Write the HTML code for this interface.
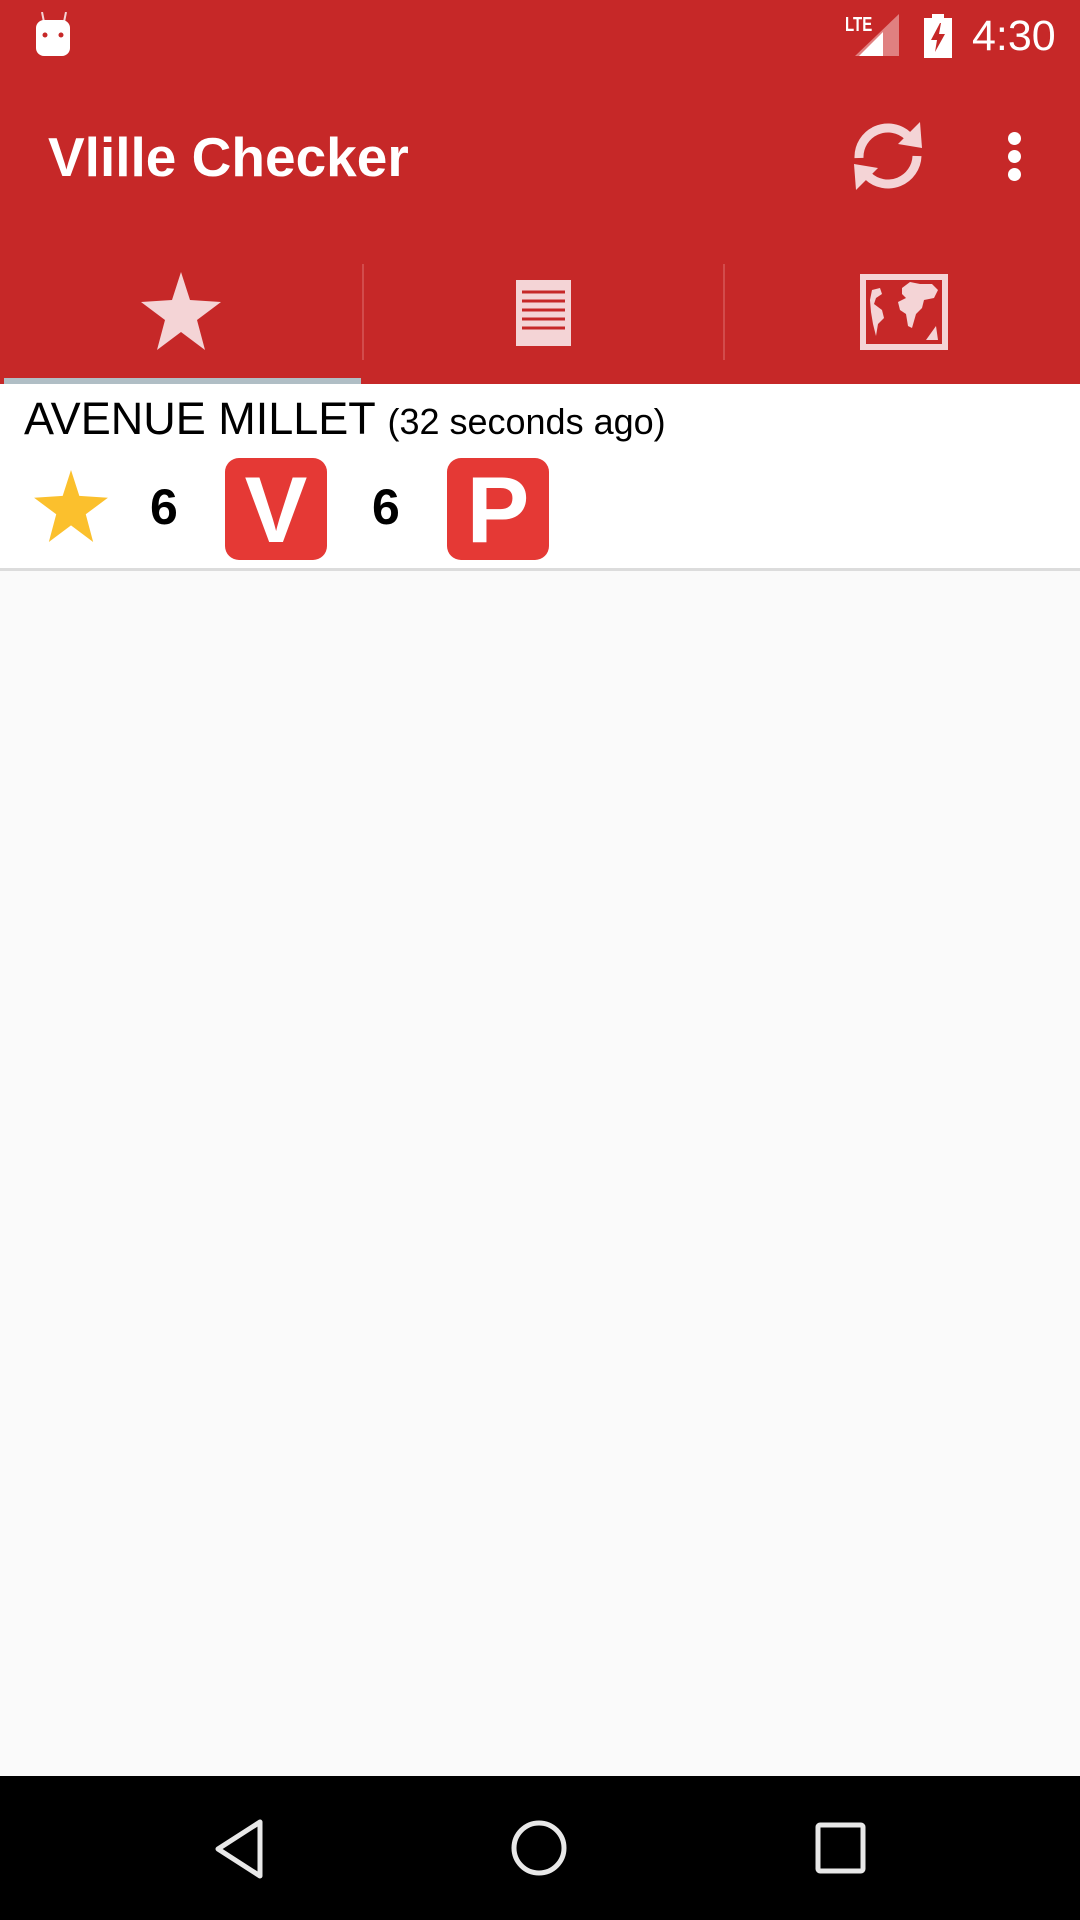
<!DOCTYPE html>
<html><head><meta charset="utf-8"><style>
*{margin:0;padding:0;box-sizing:border-box}
body{width:1080px;height:1920px;background:#fafafa;font-family:"Liberation Sans",sans-serif;position:relative;overflow:hidden}
.abs{position:absolute}
#top{left:0;top:0;width:1080px;height:384px;background:#c62828}
</style></head><body>
<div id="top" class="abs"></div>
<!-- status bar -->
<svg class="abs" style="left:34px;top:12px" width="40" height="44" viewBox="0 0 40 44">
<line x1="8" y1="0" x2="10" y2="10" stroke="#f4d4d6" stroke-width="2"/>
<line x1="32" y1="0" x2="30" y2="10" stroke="#f4d4d6" stroke-width="2"/>
<rect x="2" y="8" width="34" height="36" rx="8" fill="#fff"/>
<circle cx="11" cy="23" r="2.5" fill="#c62828"/><circle cx="27" cy="23" r="2.5" fill="#c62828"/>
</svg>
<div class="abs" style="left:845px;top:14px;color:#fff;font-size:20px;font-weight:bold;transform:scaleX(0.75);transform-origin:left">LTE</div>
<svg class="abs" style="left:855px;top:14px" width="44" height="42" viewBox="0 0 44 42">
<polygon points="44,0 44,42 0,42" fill="#e08080"/>
<polygon points="28,18 28,42 4,42" fill="#fff"/>
</svg>
<svg class="abs" style="left:924px;top:14px" width="28" height="44" viewBox="0 0 28 44">
<rect x="8" y="0" width="12" height="5" fill="#fff"/>
<rect x="0" y="4" width="28" height="40" fill="#fff"/>
<polygon points="16,9 7,26 13,26 11,38 21,20 15,20 17,9" fill="#c62828"/>
</svg>
<div class="abs" style="left:972px;top:12px;color:#fff;font-size:43px;letter-spacing:0">4:30</div>
<!-- toolbar -->
<div class="abs" style="left:48px;top:122px;color:#fff;font-size:55px;font-weight:bold;line-height:70px">Vlille Checker</div>
<svg class="abs" style="left:852px;top:118px" width="72" height="76" viewBox="0 0 72 76" fill="none" stroke="#f4d4d6" stroke-width="9">
<path d="M7 40 A29 29 0 0 1 56 18"/>
<polygon points="46,26 70,30 68,4" fill="#f4d4d6" stroke="none"/>
<path d="M65 38 A29 29 0 0 1 16 58"/>
<polygon points="26,50 2,46 4,72" fill="#f4d4d6" stroke="none"/>
</svg>
<div class="abs" style="left:1008px;top:132px;width:13px;height:13px;border-radius:50%;background:#fff"></div>
<div class="abs" style="left:1008px;top:150px;width:13px;height:13px;border-radius:50%;background:#fff"></div>
<div class="abs" style="left:1008px;top:168px;width:13px;height:13px;border-radius:50%;background:#fff"></div>
<!-- tabs -->
<div class="abs" style="left:362px;top:264px;width:2px;height:96px;background:#d24c4c"></div>
<div class="abs" style="left:723px;top:264px;width:2px;height:96px;background:#d24c4c"></div>
<svg class="abs" style="left:141px;top:272px" width="80" height="78" viewBox="0 0 80 78">
<polygon points="40,0 49,28 80,30 56,48 64,78 40,60 16,78 24,48 0,30 31,28" fill="#f4d4d6"/>
</svg>
<svg class="abs" style="left:516px;top:280px" width="55" height="66" viewBox="0 0 55 66">
<rect width="55" height="66" fill="#f4d4d6"/>
<g stroke="#c62828" stroke-width="3">
<line x1="6" y1="12" x2="49" y2="12"/><line x1="6" y1="21" x2="49" y2="21"/><line x1="6" y1="30" x2="49" y2="30"/><line x1="6" y1="39" x2="49" y2="39"/><line x1="6" y1="48" x2="49" y2="48"/>
</g></svg>
<svg class="abs" style="left:860px;top:274px" width="88" height="76" viewBox="0 0 88 76">
<rect x="3" y="3" width="82" height="70" fill="none" stroke="#f4d4d6" stroke-width="6"/>
<path d="M12 16 L20 14 L22 20 L16 24 L14 30 L22 36 L24 44 L18 50 L16 62 L13 50 L11 38 L10 26 Z M42 14 L50 8 L60 10 L72 10 L78 16 L74 24 L64 26 L62 34 L56 40 L52 54 L48 52 L46 40 L40 36 L38 28 L46 24 L42 20 Z M76 52 L78 66 L66 66 Z" fill="#f4d4d6"/>
</svg>
<div class="abs" style="left:4px;top:378px;width:357px;height:6px;background:#b0bec5"></div>
<!-- row -->
<div class="abs" style="left:0;top:384px;width:1080px;height:184px;background:#fff"></div>
<div class="abs" style="left:24px;top:392px;font-size:45px;color:#000;line-height:54px;white-space:nowrap">AVENUE MILLET <span style="font-size:36px">(32 seconds ago)</span></div>
<svg class="abs" style="left:32px;top:470px" width="78" height="72" viewBox="0 0 80 78">
<polygon points="40,0 49,28 80,30 56,48 64,78 40,60 16,78 24,48 0,30 31,28" fill="#fbc02d"/>
</svg>
<div class="abs" style="left:150px;top:478px;font-size:50px;font-weight:bold;color:#000">6</div>
<div class="abs" style="left:225px;top:458px;width:102px;height:102px;border-radius:14px;background:#e53935;color:#fff;font-size:94px;font-weight:bold;text-align:center;line-height:104px">V</div>
<div class="abs" style="left:372px;top:478px;font-size:50px;font-weight:bold;color:#000">6</div>
<div class="abs" style="left:447px;top:458px;width:102px;height:102px;border-radius:14px;background:#e53935;color:#fff;font-size:94px;font-weight:bold;text-align:center;line-height:104px">P</div>
<div class="abs" style="left:0;top:568px;width:1080px;height:3px;background:#dcdcdc"></div>
<!-- nav -->
<div class="abs" style="left:0;top:1776px;width:1080px;height:144px;background:#000"></div>
<svg class="abs" style="left:0;top:1776px" width="1080" height="144" viewBox="0 0 1080 144" fill="none" stroke="#e8e8e8" stroke-width="5" stroke-linejoin="round">
<polygon points="260,46 260,100 218,73"/>
<circle cx="539" cy="72" r="25"/>
<rect x="818" y="49" width="45" height="46" rx="2"/>
</svg>
</body></html>
